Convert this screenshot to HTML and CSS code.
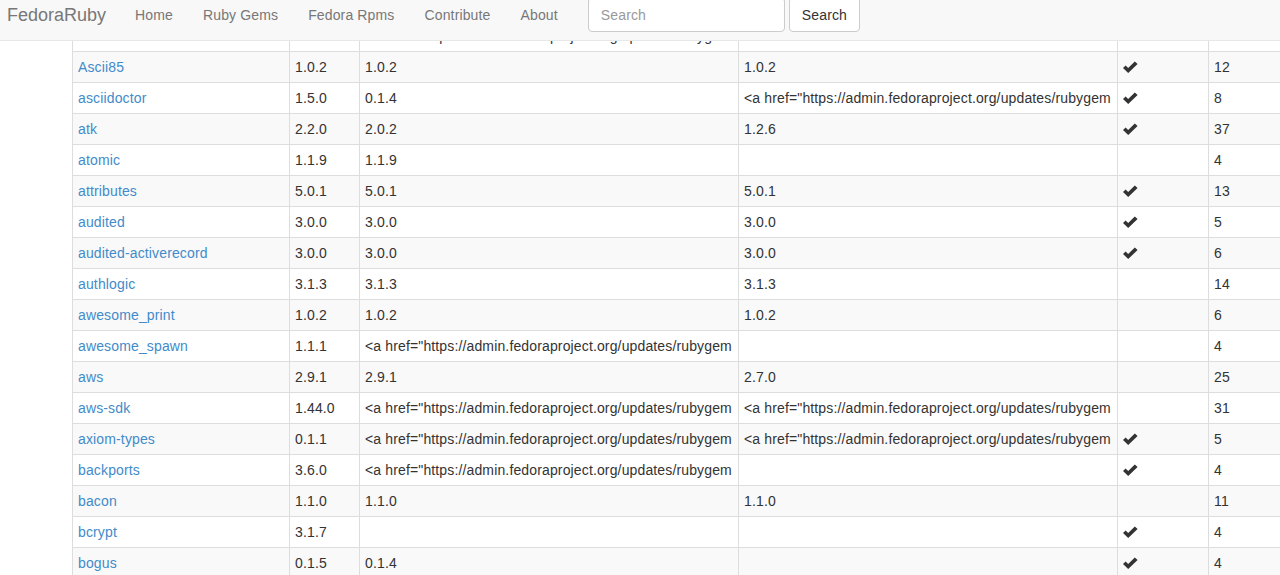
FILE: index.html
```html
<!DOCTYPE html>
<html>
<head>
<meta charset="utf-8">
<title>FedoraRuby</title>
<link rel="stylesheet" href="styles.css">
</head>
<body>
<nav class="navbar">
  <a class="brand" href="#">FedoraRuby</a>
  <ul class="nav">
    <li><a href="#">Home</a></li>
    <li><a href="#">Ruby Gems</a></li>
    <li><a href="#">Fedora Rpms</a></li>
    <li><a href="#">Contribute</a></li>
    <li><a href="#">About</a></li>
  </ul>
  <form class="search-form">
    <input class="search-input" type="text" placeholder="Search">
    <button class="search-btn" type="button">Search</button>
  </form>
</nav>
<main class="content">
  <table class="gems">
    <colgroup>
      <col class="c-name"><col class="c-ver"><col class="c-wide"><col class="c-wide"><col class="c-check"><col class="c-num">
    </colgroup>
    <tbody>
      <tr><td><a href="#">arel</a></td><td>1.0.0</td><td>&lt;a href="https://admin.fedoraproject.org/updates/rubygem</td><td></td><td></td><td>3</td></tr>
      <tr><td><a href="#">Ascii85</a></td><td>1.0.2</td><td>1.0.2</td><td>1.0.2</td><td><svg class="ok" viewBox="0 0 15 12"><polygon points="0,7 2.6,4.4 5.2,7 11.8,0.4 14.6,3 5.2,12"/></svg></td><td>12</td></tr>
      <tr><td><a href="#">asciidoctor</a></td><td>1.5.0</td><td>0.1.4</td><td>&lt;a href="https://admin.fedoraproject.org/updates/rubygem</td><td><svg class="ok" viewBox="0 0 15 12"><polygon points="0,7 2.6,4.4 5.2,7 11.8,0.4 14.6,3 5.2,12"/></svg></td><td>8</td></tr>
      <tr><td><a href="#">atk</a></td><td>2.2.0</td><td>2.0.2</td><td>1.2.6</td><td><svg class="ok" viewBox="0 0 15 12"><polygon points="0,7 2.6,4.4 5.2,7 11.8,0.4 14.6,3 5.2,12"/></svg></td><td>37</td></tr>
      <tr><td><a href="#">atomic</a></td><td>1.1.9</td><td>1.1.9</td><td></td><td></td><td>4</td></tr>
      <tr><td><a href="#">attributes</a></td><td>5.0.1</td><td>5.0.1</td><td>5.0.1</td><td><svg class="ok" viewBox="0 0 15 12"><polygon points="0,7 2.6,4.4 5.2,7 11.8,0.4 14.6,3 5.2,12"/></svg></td><td>13</td></tr>
      <tr><td><a href="#">audited</a></td><td>3.0.0</td><td>3.0.0</td><td>3.0.0</td><td><svg class="ok" viewBox="0 0 15 12"><polygon points="0,7 2.6,4.4 5.2,7 11.8,0.4 14.6,3 5.2,12"/></svg></td><td>5</td></tr>
      <tr><td><a href="#">audited-activerecord</a></td><td>3.0.0</td><td>3.0.0</td><td>3.0.0</td><td><svg class="ok" viewBox="0 0 15 12"><polygon points="0,7 2.6,4.4 5.2,7 11.8,0.4 14.6,3 5.2,12"/></svg></td><td>6</td></tr>
      <tr><td><a href="#">authlogic</a></td><td>3.1.3</td><td>3.1.3</td><td>3.1.3</td><td></td><td>14</td></tr>
      <tr><td><a href="#">awesome_print</a></td><td>1.0.2</td><td>1.0.2</td><td>1.0.2</td><td></td><td>6</td></tr>
      <tr><td><a href="#">awesome_spawn</a></td><td>1.1.1</td><td>&lt;a href="https://admin.fedoraproject.org/updates/rubygem</td><td></td><td></td><td>4</td></tr>
      <tr><td><a href="#">aws</a></td><td>2.9.1</td><td>2.9.1</td><td>2.7.0</td><td></td><td>25</td></tr>
      <tr><td><a href="#">aws-sdk</a></td><td>1.44.0</td><td>&lt;a href="https://admin.fedoraproject.org/updates/rubygem</td><td>&lt;a href="https://admin.fedoraproject.org/updates/rubygem</td><td></td><td>31</td></tr>
      <tr><td><a href="#">axiom-types</a></td><td>0.1.1</td><td>&lt;a href="https://admin.fedoraproject.org/updates/rubygem</td><td>&lt;a href="https://admin.fedoraproject.org/updates/rubygem</td><td><svg class="ok" viewBox="0 0 15 12"><polygon points="0,7 2.6,4.4 5.2,7 11.8,0.4 14.6,3 5.2,12"/></svg></td><td>5</td></tr>
      <tr><td><a href="#">backports</a></td><td>3.6.0</td><td>&lt;a href="https://admin.fedoraproject.org/updates/rubygem</td><td></td><td><svg class="ok" viewBox="0 0 15 12"><polygon points="0,7 2.6,4.4 5.2,7 11.8,0.4 14.6,3 5.2,12"/></svg></td><td>4</td></tr>
      <tr><td><a href="#">bacon</a></td><td>1.1.0</td><td>1.1.0</td><td>1.1.0</td><td></td><td>11</td></tr>
      <tr><td><a href="#">bcrypt</a></td><td>3.1.7</td><td></td><td></td><td><svg class="ok" viewBox="0 0 15 12"><polygon points="0,7 2.6,4.4 5.2,7 11.8,0.4 14.6,3 5.2,12"/></svg></td><td>4</td></tr>
      <tr><td><a href="#">bogus</a></td><td>0.1.5</td><td>0.1.4</td><td></td><td><svg class="ok" viewBox="0 0 15 12"><polygon points="0,7 2.6,4.4 5.2,7 11.8,0.4 14.6,3 5.2,12"/></svg></td><td>4</td></tr>
    </tbody>
  </table>
</main>
</body>
</html>
```

FILE: styles.css
```css
* { box-sizing: border-box; }

html, body {
  margin: 0;
  padding: 0;
  background: #fff;
  font-family: "Liberation Sans", Arial, Helvetica, sans-serif;
  font-size: 14px;
  line-height: 20px;
  letter-spacing: 0.14px;
  color: #333;
}

a { color: #428bca; text-decoration: none; }

.navbar {
  position: fixed;
  top: 0;
  left: 0;
  right: 0;
  z-index: 10;
  height: 41px;
  display: flex;
  align-items: flex-start;
  background: #f8f8f8;
  border-bottom: 1px solid #e7e7e7;
}

.brand {
  color: #777;
  font-size: 18px;
  line-height: 20px;
  letter-spacing: 0;
  padding: 5px 14px 0 7px;
}

.nav {
  list-style: none;
  margin: 0;
  padding: 0;
  display: flex;
}

.nav a {
  display: block;
  color: #777;
  padding: 5px 15px 0 15px;
  line-height: 20px;
}

.search-form {
  display: flex;
  gap: 4px;
  margin: -3px 0 0 0;
  padding-left: 15px;
}

.search-input {
  width: 197px;
  height: 35px;
  padding: 6px 12px;
  font: inherit;
  letter-spacing: inherit;
  color: #555;
  background: #fff;
  border: 1px solid #ccc;
  border-radius: 4px;
  box-shadow: inset 0 1px 1px rgba(0,0,0,.075);
  outline: none;
}

.search-input::placeholder { color: #999; }

.search-btn {
  height: 35px;
  width: 71px;
  padding: 6px 12px;
  font: inherit;
  letter-spacing: inherit;
  color: #333;
  background: #fff;
  border: 1px solid #ccc;
  border-radius: 4px;
}

.content {
  padding: 20px 0 0 72px;
}

.gems {
  width: 1208px;
  table-layout: fixed;
  border-collapse: collapse;
  border: 1px solid #ddd;
}

.c-name { width: 217px; }
.c-ver { width: 70px; }
.c-wide { width: 379px; }
.c-check { width: 91px; }
.c-num { width: 72px; }

.gems td {
  border: 1px solid #ddd;
  padding: 5px;
  height: 31px;
  line-height: 20px;
  white-space: nowrap;
  overflow: hidden;
  vertical-align: top;
}

.gems tbody tr:nth-child(even) { background: #f9f9f9; }

.ok {
  width: 15px;
  height: 12px;
  display: inline-block;
  vertical-align: -1px;
  fill: #333;
}
```
